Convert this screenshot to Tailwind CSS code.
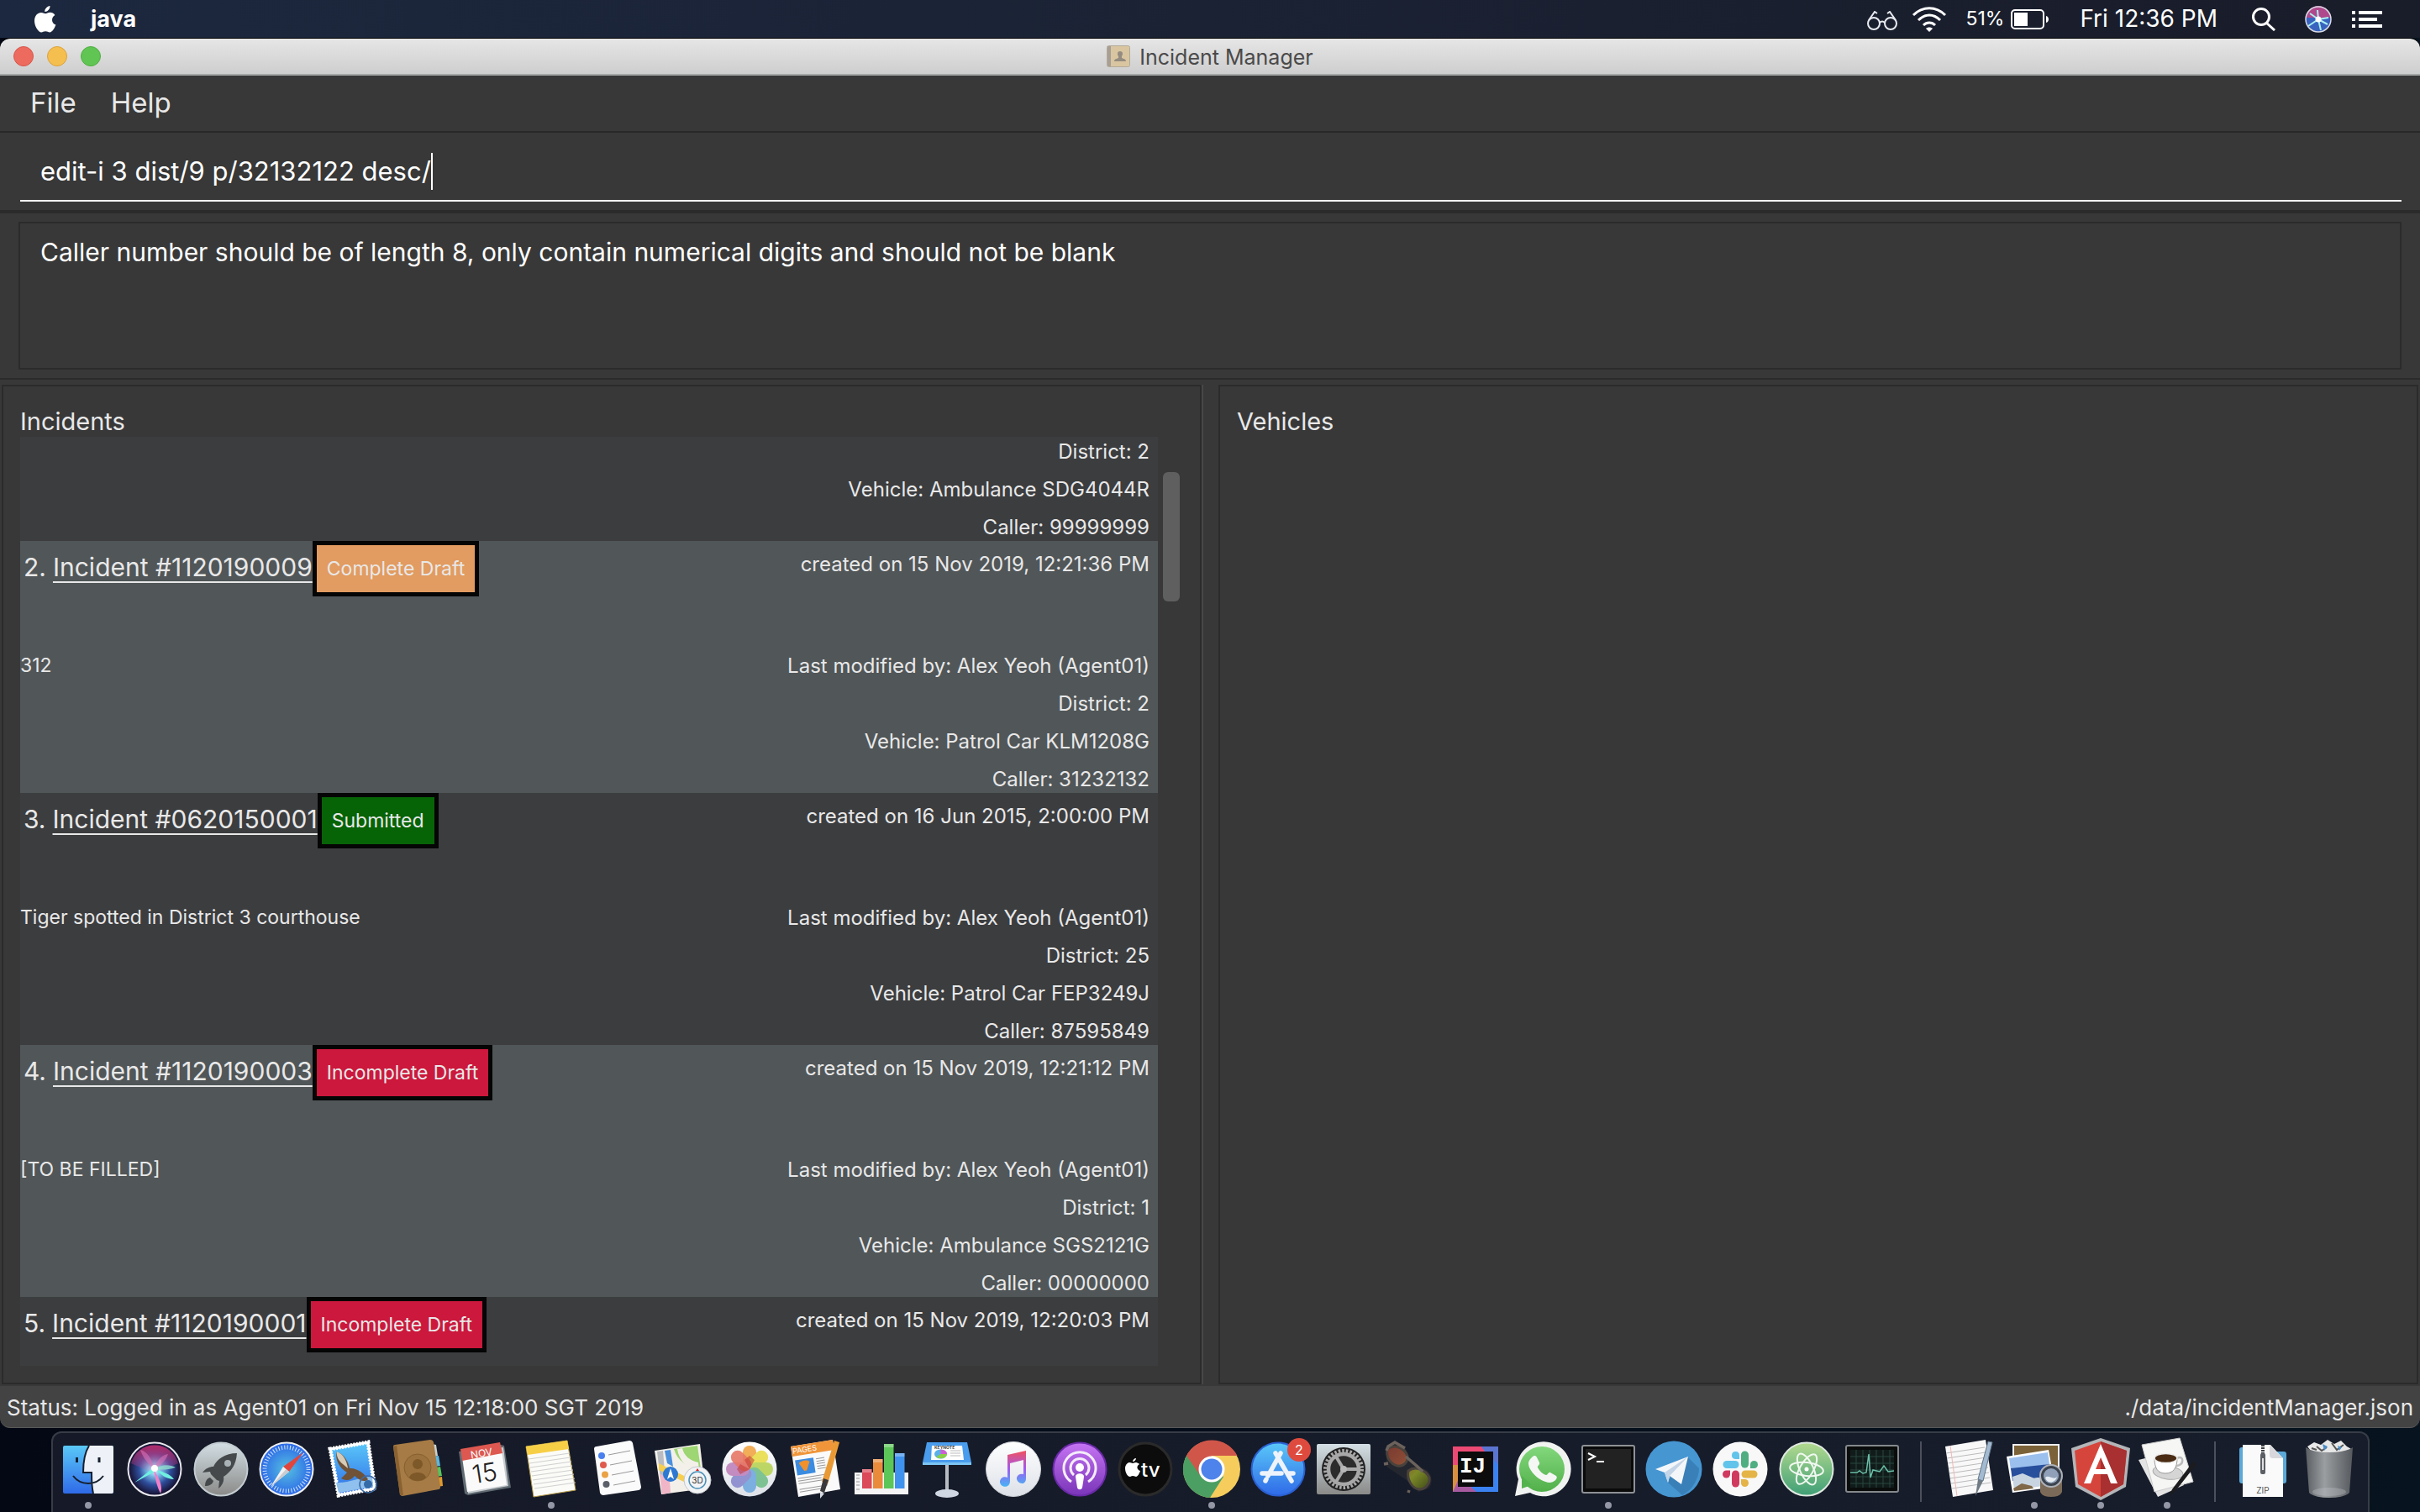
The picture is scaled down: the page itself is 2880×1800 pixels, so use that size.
<!DOCTYPE html>
<html lang="en">
<head>
<meta charset="utf-8">
<meta name="viewport" content="width=device-width, initial-scale=1">
<title>Incident Manager</title>
<script src="https://cdn.jsdelivr.net/npm/@tailwindcss/browser@4"></script>
</head>
<body class="h-screen flex flex-col overflow-hidden bg-linear-to-r from-[#040815] to-[#07131f] font-['Inter','Liberation_Sans',sans-serif] text-[#e8e8e8]">

<!-- Shared gradients -->
<svg class="absolute size-0" aria-hidden="true">
  <defs>
    <linearGradient id="blue" x1="0" y1="0" x2="0" y2="1"><stop offset="0" stop-color="#5ac8f8"/><stop offset="1" stop-color="#2f6ae8"/></linearGradient>
    <linearGradient id="white" x1="0" y1="0" x2="0" y2="1"><stop offset="0" stop-color="#ffffff"/><stop offset="1" stop-color="#dde1e8"/></linearGradient>
    <linearGradient id="silver" x1="0" y1="0" x2="0" y2="1"><stop offset="0" stop-color="#d3dfe5"/><stop offset="1" stop-color="#8a8a88"/></linearGradient>
    <linearGradient id="purple" x1="0" y1="0" x2="0" y2="1"><stop offset="0" stop-color="#c574f3"/><stop offset="1" stop-color="#7a35b8"/></linearGradient>
    <linearGradient id="note" x1="0" y1="0" x2="0" y2="1"><stop offset="0" stop-color="#f0525d"/><stop offset=".5" stop-color="#a259f0"/><stop offset="1" stop-color="#45b4f5"/></linearGradient>
    <linearGradient id="steel" x1="0" y1="0" x2="1" y2="0"><stop offset="0" stop-color="#5b5f63"/><stop offset=".4" stop-color="#9a9ea1"/><stop offset="1" stop-color="#55595d"/></linearGradient>
    <linearGradient id="atomg" x1="0" y1="0" x2="0" y2="1"><stop offset="0" stop-color="#b3da8f"/><stop offset="1" stop-color="#3f9f76"/></linearGradient>
    <linearGradient id="wa" x1="0" y1="0" x2="0" y2="1"><stop offset="0" stop-color="#82d77c"/><stop offset="1" stop-color="#52b04a"/></linearGradient>
    <linearGradient id="lens" x1="0" y1="0" x2="1" y2="1"><stop offset="0" stop-color="#7a3a30"/><stop offset=".35" stop-color="#8a4a35"/><stop offset=".65" stop-color="#7d8a28"/><stop offset="1" stop-color="#3f4a18"/></linearGradient>
    <radialGradient id="safari"><stop offset="0" stop-color="#55bfe0"/><stop offset="1" stop-color="#2c68e8"/></radialGradient>
    <radialGradient id="orb" cx=".5" cy=".5" r=".5"><stop offset="0" stop-color="#ffffff"/><stop offset=".25" stop-color="#7fc5ee"/><stop offset=".6" stop-color="#2f4e9c"/><stop offset="1" stop-color="#150f2e"/></radialGradient>
    <linearGradient id="orbtop" x1="0" y1="0" x2="0" y2="1"><stop offset="0" stop-color="#b02c6c"/><stop offset="1" stop-color="#d04aa0" stop-opacity="0"/></linearGradient>
  </defs>
</svg>

<!-- System menu bar -->
<header class="flex h-[45px] shrink-0 items-center bg-linear-to-r from-[#1c283f] to-[#191c29] pl-10 pr-[45px] text-[28px] leading-[45px] text-white">
  <button class="flex w-7 justify-center" aria-label="Apple menu">
    <svg class="h-8 w-7" viewBox="0 0 28 32" fill="#fff"><path d="M19.500 0c.3 3.500-2.800 7-6.200 7C12.900 3.700 16.200.4 19.500 0zM14.200 9.300c1.200 0 3-1.500 5.500-1.500 2.200 0 4.400 1.200 5.700 3.100-5 2.900-4.200 9.700 1 11.700-1.500 4.200-4.400 8.900-7.100 8.900-2 0-2.700-1.200-5.100-1.200S11 31.500 9.200 31.500C5.600 31.500 1 24.200 1 18c0-6.400 4-10 7.900-10 2.400 0 4.200 1.300 5.300 1.300z"/></svg>
  </button>
  <button class="ml-10 text-[27px] font-bold">java</button>
  <div class="ml-auto flex items-center">
    <svg class="mt-1 h-6 w-9" viewBox="0 0 36 24" fill="none" stroke="#e8eaf0" stroke-width="2"><circle cx="8" cy="15" r="7"/><circle cx="28" cy="15" r="7"/><path d="M15 14c2-2 4-2 6 0M2 11 9 1l3 2M34 11 27 1l-3 2"/></svg>
    <svg class="ml-4 h-8 w-11" viewBox="0 0 44 32" fill="none" stroke="#fff" stroke-width="3"><path d="M3 11c11-11 27-11 38 0M9 17c8-8 18-8 26 0M15 23c4-4 10-4 14 0"/><path d="M22 31l-4-4c2-2 6-2 8 0z" fill="#fff" stroke="none"/></svg>
    <span class="ml-[21px] text-[23px]">51%</span>
    <svg class="ml-2 h-6 w-[46px]" viewBox="0 0 46 24"><rect x="1" y="1" width="38" height="22" rx="4" fill="none" stroke="#fff" stroke-width="2"/><rect x="4" y="4" width="16" height="16" fill="#fff"/><path d="M42 8c4 1 4 7 0 8z" fill="#fff"/></svg>
    <span class="ml-9">Fri 12:36 PM</span>
    <button class="ml-10" aria-label="Search"><svg class="h-7 w-[30px]" viewBox="0 0 30 28" fill="none" stroke="#fff" stroke-width="3"><circle cx="12" cy="11" r="9.500"/><path d="m18 18 10 9"/></svg></button>
    <button class="ml-[34px]" aria-label="Siri"><svg class="size-8" viewBox="0 0 32 32"><circle cx="16" cy="16" r="15" fill="#3a63c0"/><path d="M2 14a14 14 0 0 1 28 0z" fill="#b0488c"/><path d="M16 16 4 24M16 16l11 6M16 16l-1-11M16 16l3 13M16 16l12-2M16 16 6 9" stroke="#a8f0f0" stroke-width="2"/><circle cx="16" cy="16" r="3.500" fill="#fff"/><circle cx="16" cy="16" r="15" fill="none" stroke="#d9dbe5" stroke-width="1.500"/></svg></button>
    <button class="ml-6" aria-label="Notification Center"><svg class="h-5 w-9" viewBox="0 0 36 20" fill="#fff"><path d="M0 0h4v4H0zM8 0h28v4H8zM0 8h4v4H0zM8 8h22v4H8zM0 16h4v4H0zM8 16h28v4H8z"/></svg></button>
  </div>
</header>

<!-- Application window -->
<main class="flex min-h-0 flex-1 flex-col overflow-hidden rounded-xl border-t border-black bg-[#383838]">
  <div class="flex h-11 shrink-0 items-center rounded-t-xl border-b-2 border-[#a4a8a5] bg-linear-to-b from-[#e6e6e6] to-[#cecece] px-4">
    <div class="flex flex-1 gap-4">
      <button class="size-6 rounded-full border border-[#d8564c] bg-[#ed6a5e]" aria-label="Close"></button>
      <button class="size-6 rounded-full border border-[#dba13c] bg-[#f5bf4f]" aria-label="Minimize"></button>
      <button class="size-6 rounded-full border border-[#50ae43] bg-[#61c554]" aria-label="Zoom"></button>
    </div>
    <svg class="mr-[11px] h-[26px] w-7" viewBox="0 0 28 26"><rect x=".5" y=".5" width="27" height="25" rx="2" fill="#d9c6a0" stroke="#b3aa9a"/><path d="M1 1h4v24H1z" fill="#a79f95"/><path d="M16 7c3 0 4 3 2 6v2c2 1 5 1 5 4H9c0-3 3-3 5-4v-2c-2-3-1-6 2-6z" fill="#948c80"/></svg>
    <h1 class="pt-[2px] text-[25px] leading-10 text-[#4a4a4a]">Incident Manager</h1>
    <div class="flex-1"></div>
  </div>

  <nav class="flex h-[68px] shrink-0 items-center gap-[41px] border-b-2 border-[#282828] pl-9 text-[33px]">
    <button>File</button>
    <button>Help</button>
  </nav>

  <form class="shrink-0 border-b-4 border-[#2b2b2b] pb-[10px] pl-6 pr-[22px] pt-6">
    <div class="flex items-center border-b-2 border-white pb-3 pl-6 text-white">
      <input class="h-11 [field-sizing:content] bg-transparent text-[31px] outline-none" aria-label="Command" value="edit-i 3 dist/9 p/32132122 desc/" spellcheck="false">
      <span class="h-11 w-[2px] bg-white"></span>
    </div>
  </form>

  <section class="shrink-0 border-b-2 border-[#2b2b2b] px-[22px] py-[10px]">
    <p class="h-44 border-2 border-[#2b2b2b] px-6 pt-[14px] text-[30px] leading-10 text-white">Caller number should be of length 8, only contain numerical digits and should not be blank</p>
  </section>

  <div class="mx-[2px] mb-[2px] mt-[6px] grid min-h-0 flex-1 grid-cols-[minmax(0,1fr)_20px_minmax(0,1fr)] grid-rows-[minmax(0,1fr)]">
    <section class="flex min-h-0 flex-col border-2 border-[#2b2b2b] pb-5 pl-5 pr-6 pt-6">
      <h2 class="text-[29px] leading-9">Incidents</h2>
      <div class="flex min-h-0 flex-1 gap-[6px]">
        <ul class="flex min-w-0 flex-1 flex-col overflow-hidden bg-[#3c3d3f] text-[24px] leading-7">
          <li class="-mt-44 flex h-[300px] shrink-0 justify-end pb-[2px] pr-[10px]">
            <div class="flex flex-col justify-end gap-[17px] text-right"><p>District: 2</p><p>Vehicle: Ambulance SDG4044R</p><p>Caller: 99999999</p></div>
          </li>
          <li class="flex h-[300px] shrink-0 justify-between bg-[#515658] pb-[2px] pr-[10px]">
            <div>
              <div class="flex h-[66px] pl-1 text-[30px] leading-[62px]"><span class="mr-2">2.</span><a href="#" class="underline decoration-2 underline-offset-[6px]">Incident #1120190009</a><span class="border-5 border-[#050505] bg-[#e29b60] px-3 text-[23px] leading-[56px]">Complete Draft</span></div>
              <p class="mt-[68px] text-[23px] leading-7">312</p>
            </div>
            <div class="flex flex-col gap-[17px] pt-[14px] text-right"><p class="mb-auto">created on 15 Nov 2019, 12:21:36 PM</p><p>Last modified by: Alex Yeoh (Agent01)</p><p>District: 2</p><p>Vehicle: Patrol Car KLM1208G</p><p>Caller: 31232132</p></div>
          </li>
          <li class="flex h-[300px] shrink-0 justify-between pb-[2px] pr-[10px]">
            <div>
              <div class="flex h-[66px] pl-1 text-[30px] leading-[62px]"><span class="mr-2">3.</span><a href="#" class="underline decoration-2 underline-offset-[6px]">Incident #0620150001</a><span class="border-5 border-[#050505] bg-[#066306] px-3 text-[23px] leading-[56px]">Submitted</span></div>
              <p class="mt-[68px] text-[23px] leading-7">Tiger spotted in District 3 courthouse</p>
            </div>
            <div class="flex flex-col gap-[17px] pt-[14px] text-right"><p class="mb-auto">created on 16 Jun 2015, 2:00:00 PM</p><p>Last modified by: Alex Yeoh (Agent01)</p><p>District: 25</p><p>Vehicle: Patrol Car FEP3249J</p><p>Caller: 87595849</p></div>
          </li>
          <li class="flex h-[300px] shrink-0 justify-between bg-[#515658] pb-[2px] pr-[10px]">
            <div>
              <div class="flex h-[66px] pl-1 text-[30px] leading-[62px]"><span class="mr-2">4.</span><a href="#" class="underline decoration-2 underline-offset-[6px]">Incident #1120190003</a><span class="border-5 border-[#050505] bg-[#cb183c] px-3 text-[23px] leading-[56px]">Incomplete Draft</span></div>
              <p class="mt-[68px] text-[23px] leading-7">[TO BE FILLED]</p>
            </div>
            <div class="flex flex-col gap-[17px] pt-[14px] text-right"><p class="mb-auto">created on 15 Nov 2019, 12:21:12 PM</p><p>Last modified by: Alex Yeoh (Agent01)</p><p>District: 1</p><p>Vehicle: Ambulance SGS2121G</p><p>Caller: 00000000</p></div>
          </li>
          <li class="flex h-[300px] shrink-0 justify-between pb-[2px] pr-[10px]">
            <div class="flex h-[66px] pl-1 text-[30px] leading-[62px]"><span class="mr-2">5.</span><a href="#" class="underline decoration-2 underline-offset-[6px]">Incident #1120190001</a><span class="border-5 border-[#050505] bg-[#cb183c] px-3 text-[23px] leading-[56px]">Incomplete Draft</span></div>
            <p class="pt-[14px]">created on 15 Nov 2019, 12:20:03 PM</p>
          </li>
        </ul>
        <div class="w-5 pt-[42px]"><div class="h-[154px] rounded-md bg-[#5f5f5f]"></div></div>
      </div>
    </section>
    <div class="border-l-2 border-[#474747]"></div>
    <section class="flex flex-col border-2 border-[#2b2b2b] px-5 pt-6">
      <h2 class="text-[29px] leading-9">Vehicles</h2>
    </section>
  </div>

  <footer class="flex h-[50px] shrink-0 items-center justify-between rounded-b-xl border-b border-[#5a5a5a] bg-[#434343] px-2 pt-[2px] text-[26px]">
    <span>Status: Logged in as Agent01 on Fri Nov 15 12:18:00 SGT 2019</span>
    <span>./data/incidentManager.json</span>
  </footer>
</main>

<!-- Dock -->
<nav aria-label="Dock" class="ml-[61px] mr-[60px] mt-1 h-24 shrink-0 rounded-t-xl border-x-2 border-t-2 border-[#373c47] bg-linear-to-r from-[#161a28] to-[#171d2b] pl-[3px] pr-[7px] pt-1">
<ul class="flex [&>li]:relative [&>li]:min-w-0 [&>li]:flex-1 [&_button]:block [&_button]:w-full [&_svg]:mx-auto [&_svg]:size-[78px] [&_svg]:overflow-visible">
  <li><button aria-label="Finder"><svg viewBox="0 0 78 78"><rect x="9" y="11" width="60" height="57" rx="2" fill="url(#blue)"/><path d="M40 11h27q2 0 2 2v53q0 2-2 2H45c-2-8-2-16-2-25H33c0-12 2-24 7-32z" fill="#eef2f8"/><path d="M40 11c-5 8-7 20-7 32h10c0 9 0 17 2 25M21 47c9 12 27 12 36 0" fill="none" stroke="#16202e" stroke-width="2"/><path d="M25.500 25v6M52 25v6" stroke="#16202e" stroke-width="3"/></svg></button><i class="absolute left-1/2 top-[78px] -ml-1 size-2 rounded-full bg-[#9498a6]"></i></li>
  <li><button aria-label="Siri"><svg viewBox="0 0 78 78"><circle cx="39" cy="39" r="31" fill="url(#orb)"/><path d="M11 32a29 29 0 0 1 56 0L39 45z" fill="url(#orbtop)"/><path d="M39 39C28 30 24 22 22 16c9 2 14 12 17 23zM39 39c2-12 10-17 16-18-3 9-9 13-16 18z" fill="#d873b8" opacity=".6"/><path d="M39 39c8-6 18-6 25-2-9 3-17 3-25 2z" fill="#8de0d0" opacity=".8"/><path d="M38 37 15 55l26-14zM40 39c10 4 18 6 22 12-9 0-15-5-22-12z" fill="#6ff0e0"/><path d="M38 40c2 12 4 20 8 28 3-8-1-18-8-28z" fill="#f080c8"/><circle cx="39" cy="38" r="4" fill="#fff"/><circle cx="39" cy="39" r="31.500" fill="none" stroke="#e8e8ee" stroke-width="2"/></svg></button></li>
  <li><button aria-label="Launchpad"><svg viewBox="0 0 78 78"><circle cx="39" cy="39" r="31.500" fill="url(#silver)" stroke="#c3ccd1" stroke-width="2"/><path d="M58 20c-14 0-24 7-28 16-5 0-9 2-13 7l9-1 1 3 7 7 3 1-1 9c5-4 7-9 6-14 9-6 15-14 16-28zM26 49c-4 1-6 5-6 10 5 0 9-2 10-6z" fill="#45494b"/><circle cx="47" cy="32" r="4" fill="#aab3b7"/></svg></button></li>
  <li><button aria-label="Safari"><svg viewBox="0 0 78 78"><circle cx="39" cy="39" r="31.500" fill="url(#safari)" stroke="#eef0f2" stroke-width="2"/><circle cx="39" cy="39" r="26" fill="none" stroke="#d5e6fa" stroke-width="5" stroke-dasharray="1 2.400"/><path d="m59 19-24 17 7 6z" fill="#e2453c"/><path d="m20 60 15-24 7 6z" fill="#f2f2f2"/><path d="m20 60 18.500-21 3.500 3z" fill="#c9ccd0"/></svg></button></li>
  <li><button aria-label="Mail"><svg viewBox="0 0 78 78"><path d="m12 15 45-8 8 55-43 8z" fill="url(#blue)" stroke="#fff" stroke-width="5" stroke-dasharray="2 1.500"/><path d="m12 15 45-8 8 55-43 8z" fill="none" stroke="#fff" stroke-width="3"/><path d="m22 67 41-7-1-12c-14 0-28 8-43 7z" fill="#8fc0ee"/><path d="M20 18c8 3 14 12 15 20 8-1 18 6 22 13-3 4-10 2-16-4-4 6-11 6-16 3l7-7C23 38 17 27 20 18z" fill="#6f5237"/><path d="M20 18c8 3 12 12 13 20l-6-5c-5-4-8-9-7-15z" fill="#d5cbb8"/><circle cx="57" cy="57" r="10" fill="none" stroke="#3d6ba5" stroke-width="1.500"/><circle cx="57" cy="57" r="5" fill="#356aa8"/></svg></button></li>
  <li><button aria-label="Contacts"><svg viewBox="0 0 78 78"><path d="m55 9 5 1 2 13-6 2z" fill="#c9d0d0"/><path d="m57 24 6-1 2 12-7 1z" fill="#5bb7e0"/><path d="m59 37 6-1 2 11-7 1z" fill="#57c35c"/><path d="m61 49 6-1 1 11-7 1z" fill="#e09a2d"/><path d="M9 12q0-2 2-2l42-6q3 0 4 3l8 53q0 3-2 3l-43 8q-2 0-3-2z" fill="#a67b45"/><path d="m9 12 4-1 8 59-4 0z" fill="#8a6231"/><circle cx="38" cy="37" r="16" fill="#9b713d" stroke="#85602f"/><circle cx="38" cy="33" r="6" fill="#7d5828"/><path d="M28 49c2-8 18-8 20 0-5 5-15 5-20 0z" fill="#7d5828"/></svg></button></li>
  <li><button aria-label="Calendar"><svg viewBox="0 0 78 78"><path d="m8 18 50-8 4 1 8 50-51 9-4-2z" fill="#5f6a72"/><path d="m14 20 47-7 6 46-48 9z" fill="#c8ccd0"/><path d="m12 25 47-8 6 41-47 8z" fill="#fafafa"/><path d="m10 15 47-8 3 13-48 9z" fill="#dc5850"/><g transform="rotate(-9 39 39)"><text x="38" y="24" font-size="12" text-anchor="middle" fill="#fff">NOV</text><text x="38" y="54" font-size="30" font-weight="300" text-anchor="middle" fill="#222">15</text></g></svg></button></li>
  <li><button aria-label="Notes"><svg viewBox="0 0 78 78"><path d="m9 12 49-7 10 59-50 8z" fill="#fbfbf8" stroke="#b59b48"/><path d="m9 12 49-7 2 10-49 7z" fill="#f7cf46"/><path d="m12 27 49-7m-48 12 49-7m-48 12 49-7m-48 12 49-7m-48 12 49-7m-48 12 49-7m-48 12 49-7m-48 12 49-7" stroke="#d0d0d0"/></svg></button><i class="absolute left-1/2 top-[78px] -ml-1 size-2 rounded-full bg-[#9498a6]"></i></li>
  <li><button aria-label="Reminders"><svg viewBox="0 0 78 78"><path d="m12 15q0-3 3-3l39-7q3 0 4 3l10 52q0 3-3 4l-42 6q-3 0-4-3z" fill="#fbfbfb"/><path d="m29 22 26-5m-24 17 26-5m-24 17 26-5m-24 17 26-5" stroke="#9a9a9a"/><circle cx="21" cy="23" r="4" fill="#4a7ff0"/><circle cx="23" cy="34" r="4" fill="#e05a4e"/><circle cx="25" cy="45.500" r="4" fill="#eaa245"/><circle cx="26.500" cy="57" r="4" fill="#5b6068"/></svg></button></li>
  <li><button aria-label="Maps"><svg viewBox="0 0 78 78"><path d="m5 17 54-8 6 53-52 7z" fill="#f3f0ea"/><path d="m8 18 7-1 4 50-5 1z" fill="#b9bcc0"/><path d="m17 17 7-1 3 20-7-4z" fill="#4a90dc"/><path d="m28 15 28-4 4 28c-16-2-28-10-32-24z" fill="#9dd672"/><path d="M38 14c2 9 9 15 19 17l1 9c-16-2-24-12-26-25z" fill="#f3f0ea"/><path d="m10 32 48 24-1 6L10 40z" fill="#f6ce50"/><path d="m11 44 12 8 1 15-10 2z" fill="#f0b6c8"/><circle cx="24" cy="45" r="9" fill="#2d78d2"/><path d="m24 38 4 13-4-3-4 3z" fill="#fff"/><circle cx="56" cy="52" r="16" fill="#f2f3f5" stroke="#c5c8cc"/><circle cx="56" cy="52" r="10" fill="none" stroke="#4a90b8" stroke-width="1.500"/><path d="m56 38 2 3h-4z" fill="#d22"/><text x="56" y="56" font-size="10" text-anchor="middle" fill="#333">3D</text></svg></button></li>
  <li><button aria-label="Photos"><svg viewBox="0 0 78 78"><circle cx="39" cy="39" r="32.500" fill="url(#white)"/><g opacity=".85"><rect x="31" y="11" width="16" height="28" rx="8" fill="#f0a03c"/><rect x="31" y="11" width="16" height="28" rx="8" fill="#e8dc40" transform="rotate(45 39 39)"/><rect x="31" y="11" width="16" height="28" rx="8" fill="#b4d24e" transform="rotate(90 39 39)"/><rect x="31" y="11" width="16" height="28" rx="8" fill="#6cbc84" transform="rotate(135 39 39)"/><rect x="31" y="11" width="16" height="28" rx="8" fill="#6aa6de" transform="rotate(180 39 39)"/><rect x="31" y="11" width="16" height="28" rx="8" fill="#8484cc" transform="rotate(225 39 39)"/><rect x="31" y="11" width="16" height="28" rx="8" fill="#bc7cb8" transform="rotate(270 39 39)"/><rect x="31" y="11" width="16" height="28" rx="8" fill="#e4604c" opacity=".9" transform="rotate(315 39 39)"/></g><path d="m39 39-6-11 6-5 6 5zM39 39l-11-6-4 6 4 6z" fill="#c03030" opacity=".5"/></svg></button></li>
  <li><button aria-label="Pages"><svg viewBox="0 0 78 78"><path d="m10 12 50-8 9 59-50 9z" fill="#fafafa"/><path d="m10 12 50-8 2 12-50 8z" fill="#f0953a"/><g transform="rotate(-9 39 39)"><text x="16" y="17" font-size="9" fill="#fff">PAGES</text><rect x="17" y="25" width="22" height="18" fill="#3b8be0"/><path d="M21 29c4-3 10-3 13 0l-5 10h-3z" fill="#f0912c"/><path d="M42 27h10m-10 3h10m-10 3h10m-10 3h10m-10 3h10M17 47h34M17 50h28M17 53h34M17 60h34M17 63h26" stroke="#999"/></g><path d="m62 5 6 2-14 50-7-3z" fill="#ea9a35"/><path d="m49 50 6 2-5 15-5-2z" fill="#3a3a3c"/><path d="m45 66 5 2-5 6z" fill="#d5dae0"/></svg></button></li>
  <li><button aria-label="Numbers"><svg viewBox="0 0 78 78"><path d="M7 43h64v26H7z" fill="#f4f4f4"/><path d="M9 46h4m-4 4h4m-4 4h4m-4 4h4m-4 5h4" stroke="#999"/><rect x="16" y="39" width="11.500" height="23" fill="#da4a58"/><rect x="29" y="27" width="11.500" height="35" fill="#ea8b3c"/><rect x="42" y="9" width="11.500" height="53" fill="#5cc658"/><rect x="55" y="20" width="11.500" height="42" fill="#3f93ee"/><path d="M16 39h11.500v4H16zM29 27h11.500v4H29zM42 9h11.500v4H42zM55 20h11.500v4H55z" fill="#fff" opacity=".3"/></svg></button></li>
  <li><button aria-label="Keynote"><svg viewBox="0 0 78 78"><path d="M37 33h4v34h-4z" fill="#b8bcc2"/><ellipse cx="39" cy="68" rx="14" ry="5" fill="#cfd8e2"/><path d="M15 7h48l5 24H10z" fill="#4a9cec"/><path d="M10 31h58v3H10z" fill="#7cc4f4"/><path d="M21 11h36l2 17H20z" fill="#fff"/><text x="24" y="15" font-size="5" font-weight="700" fill="#444">KEYNOTE</text><ellipse cx="31.500" cy="21" rx="7.500" ry="5.500" fill="#5ab0e8"/><path d="M31.500 21V15.500a7.500 5.500 0 0 1 7.500 5.500z" fill="#d060d0"/><path d="M31.500 21H39a7.500 5.500 0 0 1-13 3.500z" fill="#8cd048"/><path d="M43 17h12M43 20h12M43 23h12" stroke="#bbb"/></svg></button></li>
  <li><button aria-label="Music"><svg viewBox="0 0 78 78"><circle cx="39" cy="39" r="32.500" fill="url(#white)" stroke="#cfd2d6"/><path d="M32 22 54 17v33c0 10-12 6-11-1 1-4 5-5 8-4V28L35 32v21c0 10-13 8-12 0 1-4 5-6 9-4z" fill="url(#note)"/></svg></button></li>
  <li><button aria-label="Podcasts"><svg viewBox="0 0 78 78"><circle cx="39" cy="39" r="31.500" fill="url(#purple)" stroke="#6a2aa8" stroke-width="2"/><g fill="none" stroke="#f4ecfa" stroke-width="3"><path d="M29 54a19 19 0 1 1 20 0"/><path d="M32 46a11 11 0 1 1 14 0"/></g><circle cx="39" cy="37" r="5" fill="#fff"/><path d="M34 48c0-5 10-5 10 0l-2 13c-1 3-5 3-6 0z" fill="#fff"/></svg></button></li>
  <li><button aria-label="TV"><svg viewBox="0 0 78 78"><circle cx="39" cy="39" r="31" fill="#0c0c0c" stroke="#2a2a2a" stroke-width="3"/><path d="M28 26c0 2-2 4-4 4 0-2 2-4 4-4zM24 32c1 0 2-1 4-1 1 0 3 1 4 2-4 2-3 7 1 8-1 3-3 7-5 7-1 0-2-1-4-1s-2 1-3 1c-3 0-6-5-6-10 0-4 3-7 5-7 2 0 3 1 4 1z" fill="#fff"/><text x="34" y="48" font-size="24" font-weight="500" fill="#fff">tv</text></svg></button></li>
  <li><button aria-label="Chrome"><svg viewBox="0 0 78 78"><circle cx="39" cy="39" r="34" fill="#f6cd5c"/><path d="M39 39 9.500 22a34 34 0 0 0 27.500 51l16-25z" fill="#4c9f63"/><path d="M9 23a34 34 0 0 1 60.500 0H39L25 46z" fill="#d0564a"/><circle cx="39" cy="39" r="15.500" fill="#fff"/><circle cx="39" cy="39" r="12.500" fill="#4d83ea"/></svg></button><i class="absolute left-1/2 top-[78px] -ml-1 size-2 rounded-full bg-[#9498a6]"></i></li>
  <li><button aria-label="App Store"><svg viewBox="0 0 78 78"><circle cx="39" cy="39" r="31.500" fill="url(#blue)" stroke="#2a5fd0" stroke-width="2"/><path d="m42 20-15 27M36 20l19 33M20 44h23M51 44h6M25 51l-1 2" stroke="#eef3fb" stroke-width="5.500" stroke-linecap="round"/><circle cx="64" cy="16" r="14" fill="#de4b3e"/><text x="64" y="22" font-size="16" text-anchor="middle" fill="#fff">2</text></svg></button></li>
  <li><button aria-label="System Preferences"><svg viewBox="0 0 78 78"><rect x="7" y="9" width="64" height="60" rx="2" fill="url(#silver)"/><circle cx="39" cy="39" r="26" fill="#222"/><circle cx="39" cy="39" r="22" fill="none" stroke="#a8a8a8" stroke-width="4" stroke-dasharray="2.600 2"/><circle cx="39" cy="39" r="18" fill="#2c2c2c" stroke="#a8a8a8" stroke-width="4.500"/><path d="M39 39h17M39 39l-9-15M39 39l-9 15" stroke="#a8a8a8" stroke-width="4"/><circle cx="39" cy="39" r="4" fill="#b8b8b8"/></svg></button></li>
  <li><button aria-label="Sunglasses"><svg viewBox="0 0 78 78"><path d="M11 13 22 8l12 7 4 14 22 12c6 6 6 16 1 21l-12 4-14-14L11 36z" fill="#47413d" opacity=".3"/><path d="M12 15c8-6 20-2 24 8 1 8-5 13-12 12-8-2-14-10-12-20zM37 41c8-6 20-2 25 8 1 8-5 14-12 14-9-1-15-12-13-22z" fill="url(#lens)" stroke="#4a423c" stroke-width="3"/><path d="m34 24 14 12 6 6M11 17l2-5 8-5 12 7M8 33l5-1M38 64l-1 3" fill="none" stroke="#6b625c" stroke-width="3.500"/></svg></button></li>
  <li><button aria-label="IntelliJ IDEA"><svg viewBox="0 0 78 78"><path d="M12 12h54v54H12z" fill="#3b82f0"/><path d="M12 12h34l14 20-48 20z" fill="#ec4a74"/><path d="M46 12h20v22z" fill="#5a74d0"/><path d="M12 34h10L18 60l-6 6z" fill="#d89040"/><path d="m12 66 8-18 20 18z" fill="#a85aa0"/><path d="M18 18h42v42H18z" fill="#0c0c0c"/><path d="M23 53h15" stroke="#fff" stroke-width="3"/><text x="20" y="43" font-size="26" font-weight="700" font-family="Liberation Mono,monospace" fill="#fff">IJ</text></svg></button></li>
  <li><button aria-label="WhatsApp"><svg viewBox="0 0 78 78"><path d="M7 71 11 51a32.500 32.500 0 1 1 14 16z" fill="#f1f3f1"/><circle cx="39" cy="39" r="27" fill="url(#wa)"/><path d="M15 47v15l12-4z" fill="#55b34d"/><path d="M27 25c3-3 5-2 6 0l3 6c1 3-3 4-2 6 2 4 6 8 10 9 2 0 3-4 5-3l7 4c3 3-3 8-8 8-12-1-25-14-25-23 0-3 2-5 4-7z" fill="#f5f7f5"/></svg></button></li>
  <li><button aria-label="Terminal"><svg viewBox="0 0 78 78"><rect x="8" y="11" width="62" height="56" rx="2" fill="#0a0a0a" stroke="#8e9296" stroke-width="2"/><path d="M12 15h54v47H12z" fill="#222"/><path d="m15 20 8 4-8 4M25 30h9" fill="none" stroke="#fff" stroke-width="2"/></svg></button><i class="absolute left-1/2 top-[78px] -ml-1 size-2 rounded-full bg-[#9498a6]"></i></li>
  <li><button aria-label="Telegram"><svg viewBox="0 0 78 78"><circle cx="39" cy="39" r="33.500" fill="#4696d2"/><path d="m55 24 14 14c0 12-8 26-20 32L31 54z" fill="#3a80b8"/><path d="M17 39 56 24l-8 33-14-10-2 8-4-12z" fill="#f4f7fa"/><path d="m56 24-22 23-2 8-4-12z" fill="#c3d5e6"/></svg></button></li>
  <li><button aria-label="Slack"><svg viewBox="0 0 78 78"><circle cx="39" cy="39" r="32.500" fill="#f8f8f8"/><g stroke-width="9" stroke-linecap="round"><path d="M23 33.500h10" stroke="#62c4ea"/><path d="M44.500 22v11" stroke="#4fae82"/><path d="M45 45h10" stroke="#e4b447"/><path d="M33.500 45v11" stroke="#d03a5e"/></g><path d="M38 27h-5a4.500 4.500 0 1 1 5-4.500z" fill="#62c4ea"/><path d="M51 38v-4.500a4.500 4.500 0 1 1 4.500 4.500z" fill="#4fae82"/><path d="M40 51h4.500a4.500 4.500 0 1 1-4.500 4.500z" fill="#e4b447"/><path d="M27 40.500V45a4.500 4.500 0 1 1-4.500-4.500z" fill="#d03a5e"/></svg></button></li>
  <li><button aria-label="Atom"><svg viewBox="0 0 78 78"><circle cx="39" cy="39" r="31.500" fill="url(#atomg)" stroke="#dfe8e0" stroke-width="2"/><g fill="none" stroke="#f0f8f0" stroke-width="2"><ellipse cx="39" cy="39" rx="20" ry="8" transform="rotate(7 39 39)"/><ellipse cx="39" cy="39" rx="20" ry="8" transform="rotate(65 39 39)"/><ellipse cx="39" cy="39" rx="20" ry="8" transform="rotate(120 39 39)"/></g><circle cx="39" cy="39" r="2.500" fill="#fff"/></svg></button></li>
  <li><button aria-label="Activity Monitor"><svg viewBox="0 0 78 78"><rect x="8" y="11" width="62" height="55" rx="2" fill="#0a0c0c" stroke="#85898c" stroke-width="2"/><path d="M13 16h52v45H13z" fill="#111c1a"/><path d="M20 16v45M28 16v45M36 16v45M44 16v45M52 16v45M60 16v45M13 24h52M13 32h52M13 40h52M13 48h52M13 56h52" stroke="#29463f"/><path d="M13 43h8l3-2 4 3 4-1 3-22 2 28 3-9 8 2 5-7 5 7 7-1" fill="none" stroke="#6abfa8" stroke-width="1.500"/></svg></button></li>
  <li class="h-[78px] max-w-9 shrink-0 basis-9 pt-[6px]"><div class="mx-auto h-[72px] w-[2px] bg-[#4b505c]"></div></li>
  <li><button aria-label="TextEdit"><svg viewBox="0 0 78 78"><path d="m11 12 48-8 9 60-48 8z" fill="#f8f8f8"/><path d="m12 20 46-7m-45 13 46-7m-45 13 46-7m-45 13 46-7m-45 13 46-7m-45 13 46-7m-45 13 46-7m-45 13 46-7" stroke="#bbb"/><path d="m17 11 8 60" stroke="#f0b8b8"/><path d="m62 6 5 1-11 46-6-2z" fill="#a3bad0" stroke="#5f7488"/><path d="m50 51 6 2-9 18z" fill="#6f7a84"/></svg></button></li>
  <li><button aria-label="Preview"><svg viewBox="0 0 78 78"><path d="M14 10h54v34H14z" fill="#7c6238" stroke="#eee" stroke-width="2"/><path d="m6 24 50-8 8 44-51 7z" fill="#fff"/><path d="m9 26 46-7 2 14-46 7z" fill="#9cc0ee"/><path d="m11 38 46-5 4 14-48 6z" fill="#284f9c"/><path d="m13 48 12-4 14 6 22-3 2 10-48 7z" fill="#c8d4e0"/><path d="m14 62 10-6 12 3 2 3-23 3z" fill="#806848"/><path d="M46 46h26v20q-2 6-13 6t-13-6z" fill="#7c6a58"/><circle cx="59" cy="47" r="13" fill="#3c4450" stroke="#aeb2b8" stroke-width="2"/><circle cx="59" cy="47" r="9" fill="#8fa0b8"/><path d="M52 49c4-4 10 4 14-1-2 8-12 9-14 1z" fill="#e6ecf2"/></svg></button><i class="absolute left-1/2 top-[78px] -ml-1 size-2 rounded-full bg-[#9498a6]"></i></li>
  <li><button aria-label="Angular"><svg viewBox="0 0 78 78"><path d="m39 2 35 12-5 46-30 16L9 60 4 14z" fill="#b3b5b8"/><path d="m39 6 31 11-4 40-27 15-27-15-4-40z" fill="#d6453c"/><path d="m39 6 31 11-4 40-27 15z" fill="#a83030"/><path d="M39 9 19 56h8l4-11h16l4 11h8zm0 16 6 14H33z" fill="#fff" fill-rule="evenodd"/></svg></button><i class="absolute left-1/2 top-[78px] -ml-1 size-2 rounded-full bg-[#9498a6]"></i></li>
  <li><button aria-label="Java"><svg viewBox="0 0 78 78"><path d="m5 28 40-10 14 40-31 14z" fill="#e4e4e4"/><path d="m9 10 45-8 16 52-46 12z" fill="#f6f6f4" stroke="#ccc"/><ellipse cx="40" cy="43" rx="18" ry="8" fill="#d5d5d5" stroke="#aaa" transform="rotate(8 40 43)"/><path d="M24 26c0 12 4 18 13 18s14-6 14-18z" fill="#fff" stroke="#999"/><path d="M51 26c8-5 9 9-1 9" fill="none" stroke="#bbb" stroke-width="2.500"/><ellipse cx="37.500" cy="26" rx="13.500" ry="5.500" fill="#4a2c14" stroke="#eee" stroke-width="1.500"/><path d="m70 30 4 3-25 32-7 6 3-8z" fill="#1c1c1e"/></svg></button><i class="absolute left-1/2 top-[78px] -ml-1 size-2 rounded-full bg-[#9498a6]"></i></li>
  <li class="h-[78px] max-w-9 shrink-0 basis-9 pt-[6px]"><div class="mx-auto h-[72px] w-[2px] bg-[#4b505c]"></div></li>
  <li><button aria-label="Downloads"><svg viewBox="0 0 78 78"><path d="M11 16q0-3 3-3h14l4 5h32q3 0 3 3v32q0 3-3 3H14q-3 0-3-3z" fill="#5ba9d8"/><path d="M15 10h33l15 16v46H15z" fill="#fafafa"/><path d="m47 10 16 16H51q-4 0-4-4z" fill="#d8d8dc"/><path d="M39 10v28" stroke="#3c4046" stroke-width="4" stroke-dasharray="2 1"/><rect x="36" y="20" width="6" height="25" rx="2" fill="#5c6066"/><path d="M39 26v14" stroke="#e0e0e0" stroke-width="2"/><text x="39" y="68" font-size="10" text-anchor="middle" fill="#555">ZIP</text></svg></button></li>
  <li><button aria-label="Trash"><svg viewBox="0 0 78 78"><path d="m13 12 8-5 8 3 8-6 8 5 8-4 7 7 5 3-8 6H20z" fill="#e8e8e8"/><path d="m24 12 6 5 6-4M42 8l6 8 8-6M18 14l6 2" fill="none" stroke="#555" stroke-width="2"/><path d="m31 9 6 3-4 5zM49 11l5 2-3 4z" fill="#4a8ec8"/><path d="m11 13 4 54q6 6 24 6t24-6l4-54q-8 6-28 6t-28-6z" fill="url(#steel)"/><ellipse cx="39" cy="66" rx="20" ry="5" fill="#c0c4c8" opacity=".35"/></svg></button></li>
</ul>
</nav>
</body>
</html>
